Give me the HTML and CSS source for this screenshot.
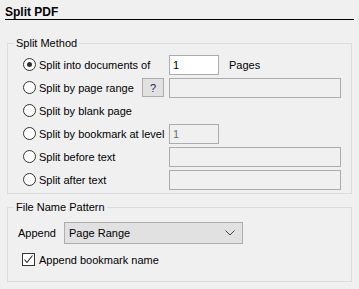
FILE: index.html
```html
<!DOCTYPE html>
<html lang="en">
<head>
	<meta charset="UTF-8">
	<title>Split PDF</title>
	<link rel="stylesheet" href="styles.css">
</head>
<body>

	<h1 class="title">Split PDF</h1>

	<!-- Split method -->
	<fieldset class="group method">
		<legend>Split Method</legend>

		<div class="row">
			<label class="opt"><span class="radio on"></span>Split into documents of</label>
			<div class="field">
				<input class="box short" type="text" value="1">
				<span class="unit">Pages</span>
			</div>
		</div>

		<div class="row">
			<div class="opt with-help">
				<label class="opt"><span class="radio"></span>Split by page range</label>
				<button class="help">?</button>
			</div>
			<div class="field"><input class="box long" type="text" disabled></div>
		</div>

		<div class="row">
			<label class="opt"><span class="radio"></span>Split by blank page</label>
		</div>

		<div class="row">
			<label class="opt"><span class="radio"></span>Split by bookmark at level</label>
			<div class="field"><input class="box short" type="text" value="1" disabled></div>
		</div>

		<div class="row">
			<label class="opt"><span class="radio"></span>Split before text</label>
			<div class="field"><input class="box long" type="text" disabled></div>
		</div>

		<div class="row">
			<label class="opt"><span class="radio"></span>Split after text</label>
			<div class="field"><input class="box long" type="text" disabled></div>
		</div>
	</fieldset>

	<!-- File name pattern -->
	<fieldset class="group pattern">
		<legend>File Name Pattern</legend>

		<div class="append-row">
			<span class="append-label">Append</span>
			<div class="combo">
				<span>Page Range</span>
				<svg class="chevron" width="10" height="6" viewBox="0 0 10 6"><polyline points="0.5,0.5 5,5 9.5,0.5" fill="none" stroke="#444" stroke-width="1"/></svg>
			</div>
		</div>

		<label class="check-row">
			<span class="check">
				<svg width="11" height="11" viewBox="0 0 11 11"><polyline points="1.5,5.5 4,8.5 9.5,1.5" fill="none" stroke="#222" stroke-width="1.1"/></svg>
			</span>
			Append bookmark name
		</label>
	</fieldset>

</body>
</html>
```

FILE: styles.css
```css
body {
    margin: 0;
    background: #f0f0f0;
    font-family: "Liberation Sans", Arial, sans-serif;
    font-size: 11px;
    color: #000;
}
.title {
    margin: 0 5px;
    padding-top: 5px;
    line-height: 14px;
    font-size: 12px;
    font-weight: bold;
    border-bottom: 1px solid #000;
}
.group {
    margin: 15px 7px 0;
    padding: 2px 0 2px 6px;
    border: 1px solid #dcdcdc;
    min-inline-size: 0;
}
.group legend {
    padding: 0 2px;
    line-height: 16px;
}
.pattern {
    margin-top: 5px;
    padding: 7px 0 15px 6px;
}
.row {
    display: grid;
    grid-template-columns: 146px 1fr;
    align-items: center;
    height: 23px;
    padding-left: 9px;
}
.opt {
    display: flex;
    align-items: center;
    gap: 3px;
}
.with-help {
    justify-content: space-between;
    padding-right: 5px;
}
.radio {
    width: 13px;
    height: 13px;
    box-sizing: border-box;
    border: 1px solid #333;
    border-radius: 50%;
    background: #fff;
    display: flex;
    align-items: center;
    justify-content: center;
}
.radio.on::after {
    content: '';
    width: 5px;
    height: 5px;
    border-radius: 50%;
    background: #333;
}
.help {
    width: 22px;
    height: 19px;
    padding: 0;
    background: #e1e1e1;
    border: 1px solid #adadad;
    font: inherit;
    color: #1f1f5c;
}
.field {
    display: flex;
    align-items: center;
}
.box {
    box-sizing: border-box;
    height: 20px;
    padding: 0 3px;
    border: 1px solid #acacac;
    background: #fff;
    font: inherit;
    color: #000;
    outline: none;
}
.box:disabled {
    background: #f0f0f0;
    color: #6d6d6d;
}
.short {
    width: 50px;
}
.long {
    width: 172px;
}
.unit {
    margin-left: 10px;
}
.append-row {
    display: flex;
    align-items: center;
    padding-left: 4px;
}
.append-label {
    width: 46px;
}
.combo {
    box-sizing: border-box;
    width: 179px;
    height: 22px;
    padding: 0 4px;
    background: #e1e1e1;
    border: 1px solid #adadad;
    display: flex;
    align-items: center;
    justify-content: space-between;
}
.chevron {
    margin-right: 3px;
}
.check-row {
    display: flex;
    align-items: center;
    gap: 4px;
    margin: 9px 0 0 8px;
    height: 13px;
}
.check {
    width: 13px;
    height: 13px;
    box-sizing: border-box;
    border: 1px solid #333;
    background: #fff;
    display: flex;
    align-items: center;
    justify-content: center;
}
```
